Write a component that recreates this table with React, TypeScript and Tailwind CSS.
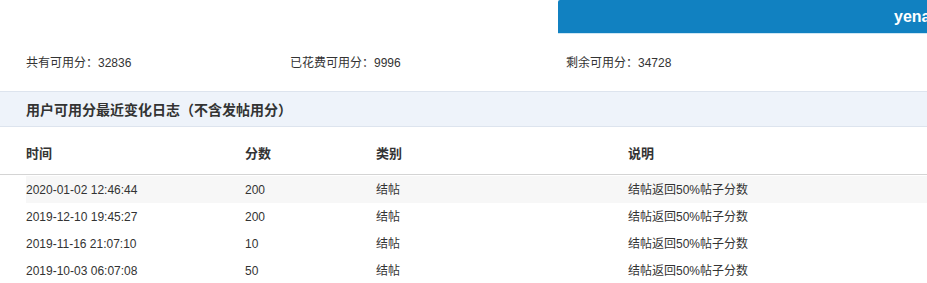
import React from "react";

const rows = [
  { t: "2020-01-02 12:46:44", s: "200", c: "结帖", d: "结帖返回50%帖子分数" },
  { t: "2019-12-10 19:45:27", s: "200", c: "结帖", d: "结帖返回50%帖子分数" },
  { t: "2019-11-16 21:07:10", s: "10", c: "结帖", d: "结帖返回50%帖子分数" },
  { t: "2019-10-03 06:07:08", s: "50", c: "结帖", d: "结帖返回50%帖子分数" },
];

export default function App() {
  return (
    <div
      className="w-[927px] h-[283px] overflow-hidden bg-white text-[#333]"
      style={{ fontFamily: '"Liberation Sans", Arial, "Noto Sans CJK SC", sans-serif' }}
    >
      <div className="flex h-[34px]">
        <div className="w-[558px] shrink-0" />
        <div className="flex-1 flex flex-col">
          <div className="h-[33px] bg-[#1181c1] rounded-tl-[2px] flex items-center pl-[336px] overflow-hidden whitespace-nowrap">
            <span className="text-white font-bold text-[16px] leading-none">yena</span>
          </div>
          <div className="h-[1px] bg-[#cde6f4]" />
        </div>
      </div>

      <div className="h-[57px] flex items-center text-[12px] pl-[26px]">
        <div className="w-[264px]">共有可用分：32836</div>
        <div className="w-[276px]">已花费可用分：9996</div>
        <div>剩余可用分：34728</div>
      </div>

      <div className="h-[36px] bg-[#eef3fa] border-y border-[#dde4ee] flex items-center pl-[26px] pt-[3px]">
        <span className="text-[14px] font-bold">用户可用分最近变化日志（不含发帖用分）</span>
      </div>

      <div className="h-[48px] border-b border-[#d4d4d4] pl-[26px] pt-[6px] grid grid-cols-[219px_131px_252px_1fr] items-center text-[13px] font-bold">
        <div>时间</div>
        <div>分数</div>
        <div>类别</div>
        <div>说明</div>
      </div>

      <div className="pl-[26px] pt-[1px] text-[12px]">
        {rows.map((r, i) => (
          <div
            key={i}
            className={
              "h-[27px] grid grid-cols-[219px_131px_252px_1fr] items-center " +
              (i === 0 ? "bg-[#f7f7f7]" : "")
            }
          >
            <div>{r.t}</div>
            <div>{r.s}</div>
            <div>{r.c}</div>
            <div>{r.d}</div>
          </div>
        ))}
      </div>
    </div>
  );
}
